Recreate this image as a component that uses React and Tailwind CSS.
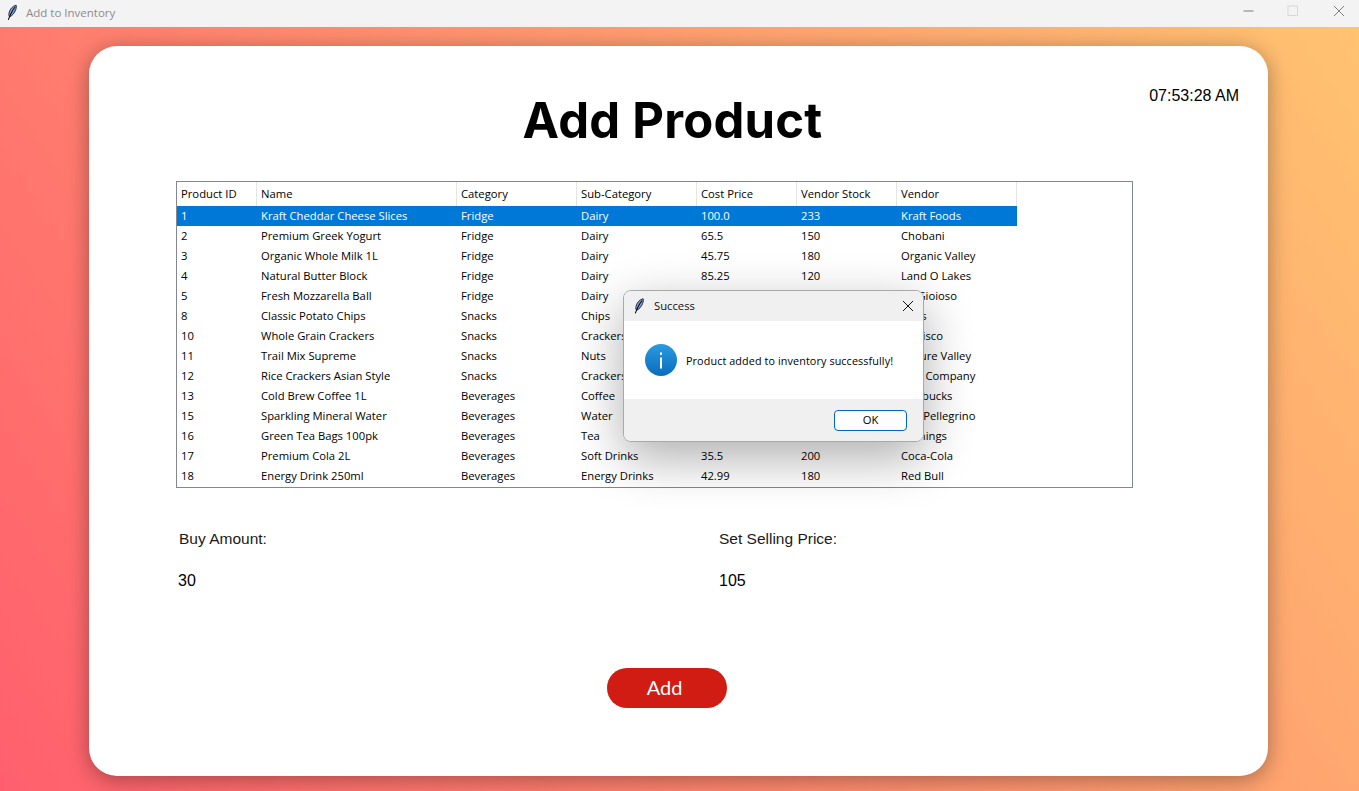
const cols = ["w-[80px]", "w-[200px]", "w-[120px]", "w-[120px]", "w-[100px]", "w-[100px]", "w-[120px]"];
const headers = ["Product ID", "Name", "Category", "Sub-Category", "Cost Price", "Vendor Stock", "Vendor"];
const rows = [
  ["1", "Kraft Cheddar Cheese Slices", "Fridge", "Dairy", "100.0", "233", "Kraft Foods"],
  ["2", "Premium Greek Yogurt", "Fridge", "Dairy", "65.5", "150", "Chobani"],
  ["3", "Organic Whole Milk 1L", "Fridge", "Dairy", "45.75", "180", "Organic Valley"],
  ["4", "Natural Butter Block", "Fridge", "Dairy", "85.25", "120", "Land O Lakes"],
  ["5", "Fresh Mozzarella Ball", "Fridge", "Dairy", "", "", "BelGioioso"],
  ["8", "Classic Potato Chips", "Snacks", "Chips", "", "", "Lay's"],
  ["10", "Whole Grain Crackers", "Snacks", "Crackers", "", "", "Nabisco"],
  ["11", "Trail Mix Supreme", "Snacks", "Nuts", "", "", "Nature Valley"],
  ["12", "Rice Crackers Asian Style", "Snacks", "Crackers", "", "", "Rice Company"],
  ["13", "Cold Brew Coffee 1L", "Beverages", "Coffee", "", "", "Starbucks"],
  ["15", "Sparkling Mineral Water", "Beverages", "Water", "", "", "San Pellegrino"],
  ["16", "Green Tea Bags 100pk", "Beverages", "Tea", "", "", "Twinings"],
  ["17", "Premium Cola 2L", "Beverages", "Soft Drinks", "35.5", "200", "Coca-Cola"],
  ["18", "Energy Drink 250ml", "Beverages", "Energy Drinks", "42.99", "180", "Red Bull"],
];

function Feather({ className }) {
  return (
    <svg viewBox="0 0 16 20" className={className}>
      <path d="M12.5 1 C8 2 4.5 6 3.6 11 C3.3 13 3.6 14.5 4.3 15.2 C7.5 14.5 10.5 10.5 12 6.5 C12.8 4.3 13 2.5 12.5 1 Z" fill="#7f9fd6" stroke="#0b1220" strokeWidth="1" />
      <path d="M11 3.5 C8 7 5.5 12 3 18.5" fill="none" stroke="#000" strokeWidth="1.3" strokeLinecap="round" />
    </svg>
  );
}

export default function App() {
  return (
    <div className="relative flex h-[791px] w-[1359px] flex-col overflow-hidden font-['Liberation_Sans',sans-serif]">
      <div className="flex h-[27px] shrink-0 items-center bg-[#f3f3f3] pb-[2px]">
        <Feather className="ml-[6px] h-[19px] w-[13px]" />
        <span className="ml-[7px] font-['Open_Sans',sans-serif] text-[11.5px] text-[#8c8c8c]">Add to Inventory</span>
        <div className="ml-auto flex items-center pb-[3px] text-[#8a8a8a]">
          <svg viewBox="0 0 12 12" className="mr-[32px] h-[12px] w-[12px]"><path d="M0.5 6H10.5" stroke="#7f7f7f" strokeWidth="1" /></svg>
          <svg viewBox="0 0 12 12" className="mr-[34px] h-[12px] w-[12px]"><rect x="1" y="1" width="9.5" height="9.5" fill="none" stroke="#d8d8d8" strokeWidth="1" /></svg>
          <svg viewBox="0 0 12 12" className="mr-[14px] h-[12px] w-[12px]"><path d="M1 1L11 11M11 1L1 11" stroke="#7f7f7f" strokeWidth="1" fill="none" /></svg>
        </div>
      </div>

      <div className="flex flex-1 items-start bg-[linear-gradient(56deg,#ff5f6d_0%,#ffc371_100%)] pl-[89px] pt-[19px]">
        <div className="relative flex h-[730px] w-[1179px] flex-col rounded-[28px] bg-white pl-[87px] pt-[47px] shadow-[0_4px_22px_rgba(0,0,0,0.35)]">
          <span className="absolute right-[29px] top-[41px] text-[16px] leading-[18px] text-black">07:53:28 AM</span>
          <h1 className="w-[993px] text-center font-['Inter',sans-serif] text-[49px] font-bold leading-[56px] tracking-[0.2px] text-black">Add Product</h1>

          <div className="mt-[32px] h-[307px] w-[957px] border border-[#828790] bg-white font-['Open_Sans',sans-serif] text-[11.25px] text-black">
            <div className="flex h-[24px]">
              {headers.map((h, i) => (
                <div key={h} className={`${cols[i]} flex items-center border-r border-[#e5e5e5] pl-[4px]`}>{h}</div>
              ))}
            </div>
            {rows.map((r, ri) => (
              <div key={r[0]} className={`flex h-[20px] w-[840px] items-center ${ri === 0 ? "bg-[#0078d7] text-white" : ""}`}>
                {r.map((c, i) => (
                  <div key={i} className={`${cols[i]} whitespace-nowrap pl-[4px]`}>{c}</div>
                ))}
              </div>
            ))}
          </div>

          <div className="mt-[42px] flex text-[15.5px] leading-[18px] text-[#1a1a1a]">
            <span className="ml-[3px] w-[540px]">Buy Amount:</span>
            <span>Set Selling Price:</span>
          </div>
          <div className="mt-[24px] flex text-[16px] leading-[18px] text-black">
            <span className="ml-[2px] w-[541px]">30</span>
            <span>105</span>
          </div>

          <button className="mt-[78px] ml-[431px] h-[40px] w-[120px] rounded-[20px] bg-[#d01c12] pb-[3px] pr-[5px] font-['Lato',sans-serif] text-[20px] text-white">Add</button>
        </div>
      </div>

      <div className="absolute left-[623px] top-[290px] flex h-[152px] w-[301px] flex-col overflow-hidden rounded-[8px] border border-[#a9a9a9] bg-white font-['Open_Sans',sans-serif] shadow-[0_16px_50px_rgba(0,0,0,0.32)]">
        <div className="flex h-[30px] shrink-0 items-center bg-[#f0f0f0] text-[11.25px] text-[#111]">
          <Feather className="ml-[9px] h-[18px] w-[13px]" />
          <span className="ml-[8px]">Success</span>
          <svg viewBox="0 0 12 12" className="ml-auto mr-[9px] h-[12px] w-[12px]"><path d="M1 1L11 11M11 1L1 11" stroke="#111" strokeWidth="1" fill="none" /></svg>
        </div>
        <div className="flex h-[78px] shrink-0 items-center bg-white pl-[21px] text-[10.8px] tracking-[0.1px] text-black">
          <svg viewBox="0 0 32 32" className="h-[32px] w-[32px]">
            <defs>
              <linearGradient id="infoGrad" x1="0" y1="0" x2="0" y2="1">
                <stop offset="0" stopColor="#2a9be0" />
                <stop offset="1" stopColor="#0a6cbd" />
              </linearGradient>
            </defs>
            <circle cx="16" cy="16" r="16" fill="url(#infoGrad)" />
            <rect x="15" y="13.5" width="2" height="11" fill="#fff" />
            <rect x="15" y="8.5" width="2" height="2.4" fill="#fff" />
          </svg>
          <span className="ml-[9px] pt-[2px]">Product added to inventory successfully!</span>
        </div>
        <div className="flex flex-1 items-center justify-end bg-[#f0f0f0] pr-[16px]">
          <button className="h-[21px] w-[73px] rounded-[4px] border border-[#0067c0] bg-[#fdfdfd] text-[11.25px] leading-none text-black">OK</button>
        </div>
      </div>
    </div>
  );
}
